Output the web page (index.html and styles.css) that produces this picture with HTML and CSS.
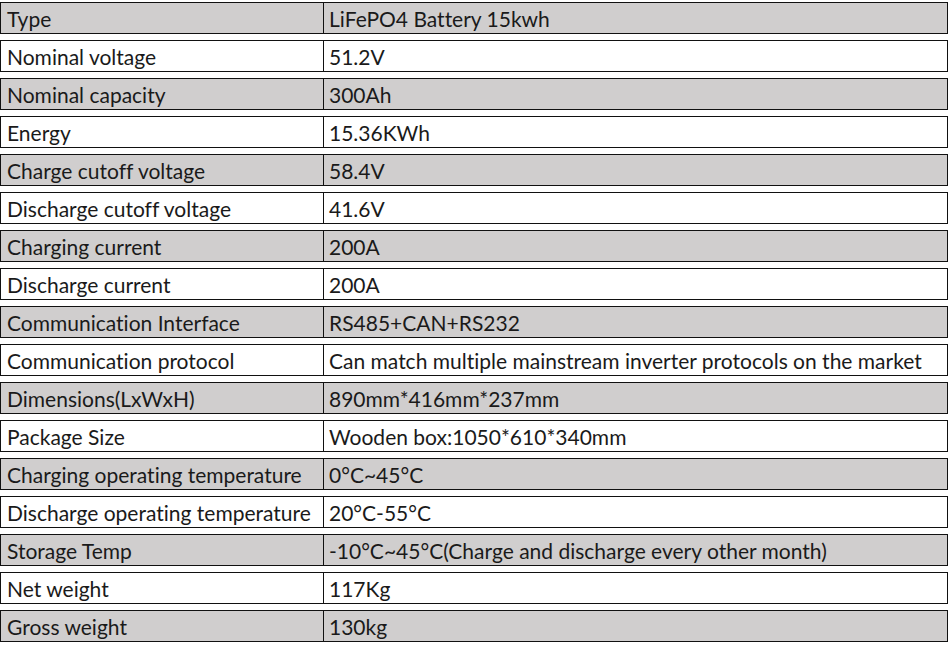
FILE: index.html
```html
<!DOCTYPE html>
<html>
<head>
<meta charset="utf-8">
<link rel="stylesheet" href="styles.css">
</head>
<body>
<div class="spec">
  <div class="row shade"><div class="k">Type</div><div class="v">LiFePO4 Battery 15kwh</div></div>
  <div class="row"><div class="k">Nominal voltage</div><div class="v">51.2V</div></div>
  <div class="row shade"><div class="k">Nominal capacity</div><div class="v">300Ah</div></div>
  <div class="row"><div class="k">Energy</div><div class="v">15.36KWh</div></div>
  <div class="row shade"><div class="k">Charge cutoff voltage</div><div class="v">58.4V</div></div>
  <div class="row"><div class="k">Discharge cutoff voltage</div><div class="v">41.6V</div></div>
  <div class="row shade"><div class="k">Charging current</div><div class="v">200A</div></div>
  <div class="row"><div class="k">Discharge current</div><div class="v">200A</div></div>
  <div class="row shade"><div class="k">Communication Interface</div><div class="v">RS485+CAN+RS232</div></div>
  <div class="row"><div class="k">Communication protocol</div><div class="v">Can match multiple mainstream inverter protocols on the market</div></div>
  <div class="row shade"><div class="k">Dimensions(LxWxH)</div><div class="v">890mm*416mm*237mm</div></div>
  <div class="row"><div class="k">Package Size</div><div class="v">Wooden box:1050*610*340mm</div></div>
  <div class="row shade"><div class="k">Charging operating temperature</div><div class="v">0°C~45°C</div></div>
  <div class="row"><div class="k">Discharge operating temperature</div><div class="v">20°C-55°C</div></div>
  <div class="row shade"><div class="k">Storage Temp</div><div class="v">-10°C~45°C(Charge and discharge every other month)</div></div>
  <div class="row"><div class="k">Net weight</div><div class="v">117Kg</div></div>
  <div class="row shade"><div class="k">Gross weight</div><div class="v">130kg</div></div>
</div>
</body>
</html>
```
FILE: styles.css
```css
html, body {
  margin: 0;
  padding: 0;
  background: #ffffff;
}
.spec {
  display: flex;
  flex-direction: column;
  gap: 6px;
  padding-top: 2px;
  width: 948px;
  font-family: Lato, "Open Sans", sans-serif;
  font-size: 21px;
  line-height: 24px;
  color: #1a1a1a;
  font-variant-ligatures: none;
}
.row {
  display: flex;
  height: 32px;
  box-sizing: border-box;
  border: 1px solid #111;
  background: #fff;
}
.row.shade {
  background: #d0cece;
}
.k {
  width: 323px;
  box-sizing: border-box;
  border-right: 1px solid #111;
  padding: 2px 0 0 6px;
  display: flex;
  align-items: center;
  white-space: nowrap;
}
.v {
  flex: 1;
  padding: 2px 0 0 5px;
  display: flex;
  align-items: center;
  white-space: nowrap;
}
```
